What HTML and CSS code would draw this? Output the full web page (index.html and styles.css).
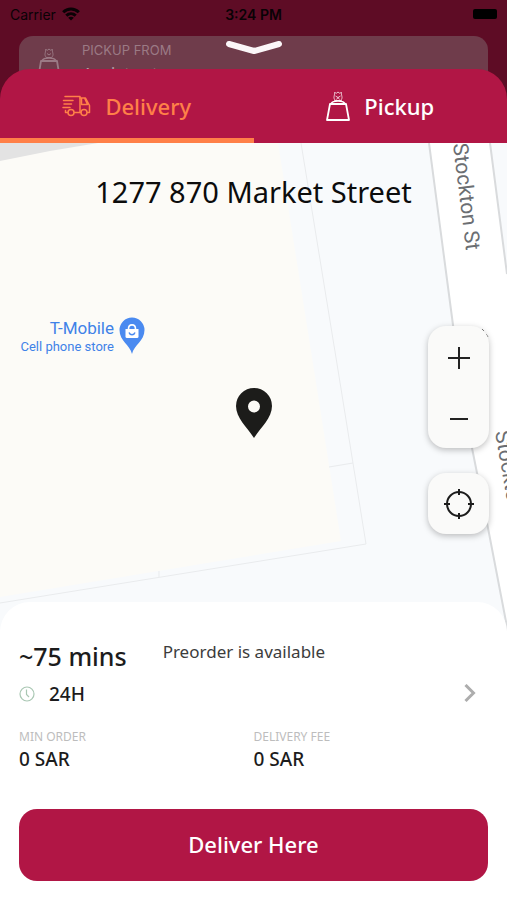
FILE: index.html
```html
<!DOCTYPE html>
<html lang="en">
<head>
    <meta charset="UTF-8"/>
    <meta name="viewport" content="width=device-width, initial-scale=1"/>
    <title>Delivery address</title>
    <link rel="stylesheet" href="styles.css">
</head>
<body>
<div class="app">

    <!-- Status bar -->
    <div class="status-bar">
        <div class="carrier">
            <span>Carrier</span>
            <svg width="18" height="14" viewBox="0 0 18 14" fill="none" stroke="#0a0205" stroke-width="3">
                <path d="M1.2 5.2C5.6 .8 12.4 .8 16.8 5.2"/>
                <path d="M4.3 8.6C7 6 11 6 13.7 8.6"/>
                <path d="M9 13.6L6.2 10.8C7.8 9.4 10.2 9.4 11.8 10.8Z" fill="#0a0205" stroke="none"/>
            </svg>
        </div>
        <span class="time">3:24 PM</span>
        <span class="battery"></span>
    </div>

    <!-- Screen behind the sheet -->
    <div class="behind-card">
        <svg width="24" height="34" viewBox="0 0 24 34" fill="none" stroke="#9b7a85" stroke-linejoin="round">
            <path d="M3 14H19L22 32H0Z" stroke-width="1.800"/>
            <path d="M4 13.500C6 10 16 10 18 13.500" stroke-width="1.500"/>
            <path d="M8.500 10.500C5.500 7.500 8 6 7.500 2.500L9.500 3.200L11 2L12.500 3.200L14.500 2.500C14 6 16.500 7.500 13.500 10.500ZM9 6.500L11 8L13 6.500"/>
        </svg>
        <div>
            <div class="behind-label">PICKUP FROM</div>
            <div class="behind-value">Assistant</div>
        </div>
    </div>
    <button class="close-handle" aria-label="Close">
        <svg width="58" height="16" viewBox="0 0 58 16" fill="none" stroke="#fbf6f8" stroke-width="6" stroke-linecap="round" stroke-linejoin="round">
            <path d="M4 5L29 12L54 5"/>
        </svg>
    </button>

    <main class="sheet">
        <div class="tabs">
            <button class="tab active">
                <svg width="29" height="22" viewBox="0 0 29 22" fill="none" stroke="currentColor" stroke-width="1.500" stroke-linecap="round" stroke-linejoin="round">
                    <path d="M3 1.500H18V17.500H12.500M1.500 5.500H11M2 9H9.500M1 12.500H8M3.500 15.500V17.500H5.500"/>
                    <path d="M18 3H23.500L27.500 10.500V17.500H25.500M18 17.500H18.800M19.500 3V9.500H25.500L23 4"/>
                    <circle cx="9" cy="17.500" r="3"/>
                    <circle cx="22" cy="17.500" r="3"/>
                </svg>
                <span>Delivery</span>
            </button>
            <button class="tab">
                <svg width="24" height="32" viewBox="0 0 24 32" fill="none" stroke="currentColor" stroke-linejoin="round">
                    <path d="M4 14H20L23 30H1Z" stroke-width="1.800"/>
                    <path d="M5 13.500C7 10 17 10 19 13.500M8 11H16" stroke-width="1.500"/>
                    <path d="M9.500 10.500C6.500 7.500 9 6 8.500 2.500L10.500 3.200L12 2L13.500 3.200L15.500 2.500C15 6 17.500 7.500 14.500 10.500ZM9.500 6L12 7.500L14.500 6M10.500 9.500L12 7.500L13.500 9.500" stroke-width="1" opacity=".75"/>
                </svg>
                <span>Pickup</span>
            </button>
        </div>

        <section class="map">
            <svg class="map-canvas" viewBox="0 143 507 489" preserveAspectRatio="xMidYMid slice">
                <rect y="143" width="507" height="489" fill="#f8fafc"/>
                <!-- buildings -->
                <path d="M0 143H278L314 370L341 541L0 597Z" fill="#fcfbf7"/>
                <path d="M0 143H98L50 151L0 161Z" fill="#e3e3e3"/>
                <path d="M301 143L338 370L366 544L0 603M329 467L353 463M159 571V577" fill="none" stroke="#e9ebed"/>
                <!-- street -->
                <path d="M429 143L453 325L472 448L488 528L508 632V274L490 143Z" fill="#fff"/>
                <path d="M429 143L453 325L472 448L488 528L508 632M490 143L507 274" fill="none" stroke="#d9dbdd" stroke-width="2"/>
                <path d="M482 329L484 331M486 334L488 337" stroke="#777" stroke-width="1"/>
                <text class="street-name" transform="translate(453 144) rotate(83)">Stockton St</text>
                <text class="street-name" transform="translate(495 432) rotate(80)">Stockton St</text>
                <!-- shop -->
                <text class="poi-name" x="114" y="334" text-anchor="end">T-Mobile</text>
                <text class="poi-type" x="114" y="351" text-anchor="end">Cell phone store</text>
                <path d="M132 354C130 345 119.500 341 119.500 330A12.500 12.500 0 0 1 144.500 330C144.500 341 134 345 132 354Z" fill="#4a8af0"/>
                <path d="M125.500 329H138.500V336.500Q138.500 338 137 338H127Q125.500 338 125.500 336.500Z" fill="#fff"/>
                <path d="M128.500 329C128.500 323.500 135.500 323.500 135.500 329" fill="none" stroke="#fff" stroke-width="1.600"/>
                <path d="M129 332.500C130 335.500 134 335.500 135 332.500" fill="none" stroke="#4a8af0" stroke-width="1.400"/>
            </svg>
            <h1 class="address">1277 870 Market Street</h1>
            <svg class="pin" width="36" height="50" viewBox="0 0 36 50">
                <path d="M18 0A18 18 0 0 0 0 18C0 30 11 39 18 50C25 39 36 30 36 18A18 18 0 0 0 18 0ZM18 12.500A6 6 0 1 1 18 24.500A6 6 0 1 1 18 12.500Z" fill="#1c1c1a"/>
            </svg>
            <div class="map-controls">
                <div class="control-box">
                    <button aria-label="Zoom in">
                        <svg width="24" height="24" viewBox="0 0 24 24" stroke="#222" stroke-width="2"><path d="M1 13H23M12 2V24"/></svg>
                    </button>
                    <button aria-label="Zoom out">
                        <svg width="24" height="24" viewBox="0 0 24 24" stroke="#222" stroke-width="2"><path d="M3 13H21"/></svg>
                    </button>
                </div>
                <div class="control-box">
                    <button aria-label="My location">
                        <svg width="30" height="30" viewBox="0 0 30 30" fill="none" stroke="#1c1c1c" stroke-width="2">
                            <circle cx="15" cy="15" r="12"/>
                            <path d="M15 0V6M15 24V30M0 15H6M24 15H30"/>
                        </svg>
                    </button>
                </div>
            </div>
        </section>

        <section class="panel">
            <div class="estimate">
                <span class="mins">~75 mins</span>
                <span class="preorder">Preorder is available</span>
            </div>
            <button class="hours">
                <svg width="16" height="16" viewBox="0 0 16 16" fill="none" stroke="#a9c7b3" stroke-width="1.200">
                    <circle cx="8" cy="8" r="7"/>
                    <path d="M7.500 3.500V8.500L10 11"/>
                </svg>
                <span>24H</span>
                <svg class="arrow" width="12" height="20" viewBox="0 0 12 20" fill="none" stroke="#adadad" stroke-width="3">
                    <path d="M1.500 1L9.500 9L1.500 17"/>
                </svg>
            </button>
            <dl class="fees">
                <div>
                    <dt>MIN ORDER</dt>
                    <dd>0 SAR</dd>
                </div>
                <div>
                    <dt>DELIVERY FEE</dt>
                    <dd>0 SAR</dd>
                </div>
            </dl>
            <button class="deliver-button">Deliver Here</button>
        </section>
    </main>
</div>
</body>
</html>
```
FILE: styles.css
```css
* {
    box-sizing: border-box;
}

body {
    margin: 0;
    font-family: "Noto Sans", sans-serif;
    color: #1c1c1c;
}

button {
    border: none;
    padding: 0;
    background: none;
    font-family: inherit;
    color: inherit;
    cursor: pointer;
}

svg {
    display: block;
}

.app {
    position: relative;
    display: flex;
    flex-direction: column;
    min-height: 100vh;
    background-color: #5e0c25;
}

.status-bar {
    display: grid;
    grid-template-columns: 1fr auto 1fr;
    align-items: center;
    height: 28px;
    margin-bottom: 8px;
    padding: 0 10px;
    font-family: Inter, sans-serif;
    font-size: 14px;
    color: #0a0205;
}

.carrier {
    display: flex;
    align-items: center;
    gap: 6px;
}

.time {
    font-weight: 600;
}

.battery {
    justify-self: end;
    width: 24px;
    height: 10px;
    border-radius: 2px;
    background-color: #000;
}

.behind-card {
    display: flex;
    gap: 20px;
    height: 64px;
    margin: 0 19px -31px;
    padding: 5px 19px;
    border-radius: 14px;
    background-color: #6f3c4b;
    overflow: hidden;
}

.behind-card svg {
    margin-top: 6px;
}

.behind-label {
    font-family: Inter, sans-serif;
    font-size: 13px;
    line-height: 19px;
    color: #9b7a85;
}

.behind-value {
    font-size: 18px;
    line-height: 28px;
    color: #b79da6;
}

.close-handle {
    position: absolute;
    top: 39px;
    left: 50%;
    transform: translateX(-50%);
}

.sheet {
    position: relative;
    flex: 1;
    display: flex;
    flex-direction: column;
    border-radius: 30px 30px 0 0;
    background-color: #b11645;
    overflow: hidden;
}

.tabs {
    display: grid;
    grid-template-columns: 1fr 1fr;
}

.tab {
    display: flex;
    align-items: center;
    justify-content: center;
    gap: 14px;
    height: 74px;
    font-size: 22px;
    font-weight: 500;
    color: #fff;
}

.tab.active {
    color: #ff8048;
    box-shadow: inset 0 -5px #ff8048;
}

.map {
    position: relative;
    flex: 1;
    min-height: 420px;
    background-color: #f8fafc;
    overflow: hidden;
}

.map-canvas {
    position: absolute;
    top: 0;
    left: 0;
    width: 100%;
    height: 100%;
}

.street-name {
    font-family: Roboto, sans-serif;
    font-size: 21px;
    fill: #6b6e72;
}

.poi-name,
.poi-type {
    font-family: Roboto, sans-serif;
    fill: #3f82e8;
}

.poi-name {
    font-size: 17px;
}

.poi-type {
    font-size: 13px;
}

.address {
    position: relative;
    margin: 0;
    padding: 29px 20px 0;
    font-size: 29px;
    font-weight: 400;
    line-height: 40px;
    text-align: center;
    color: #0c0c0c;
}

.pin {
    position: absolute;
    top: 50%;
    left: 50%;
    transform: translateX(-50%);
}

.map-controls {
    position: absolute;
    right: 18px;
    bottom: 98px;
    display: flex;
    flex-direction: column;
    gap: 25px;
}

.control-box {
    width: 61px;
    border-radius: 18px;
    background-color: #fafaf9;
    box-shadow: 0 2px 6px rgba(0, 0, 0, 0.25);
}

.control-box button {
    display: flex;
    align-items: center;
    justify-content: center;
    width: 100%;
    height: 61px;
}

.panel {
    position: relative;
    margin-top: -30px;
    padding: 36px 19px 19px;
    border-radius: 30px 30px 0 0;
    background-color: #fff;
}

.estimate {
    display: flex;
    align-items: flex-start;
    gap: 36px;
}

.mins {
    font-size: 25px;
    font-weight: 500;
    line-height: 36px;
}

.preorder {
    font-size: 17px;
    line-height: 28px;
    color: #3c3c3c;
}

.hours {
    display: flex;
    align-items: center;
    gap: 14px;
    width: 100%;
    height: 40px;
    padding-right: 12px;
    font-size: 19px;
    font-weight: 500;
}

.arrow {
    margin-left: auto;
}

.fees {
    display: grid;
    grid-template-columns: 1fr 1fr;
    margin: 14px 0 37px;
}

.fees dt {
    font-size: 12px;
    line-height: 18px;
    color: #bdbdbd;
}

.fees dd {
    margin: 0;
    font-size: 19px;
    font-weight: 500;
    line-height: 26px;
}

.deliver-button {
    display: block;
    width: 100%;
    height: 72px;
    padding-bottom: 3px;
    border-radius: 18px;
    background-color: #b11645;
    font-size: 22px;
    font-weight: 500;
    color: #fff;
}
```
